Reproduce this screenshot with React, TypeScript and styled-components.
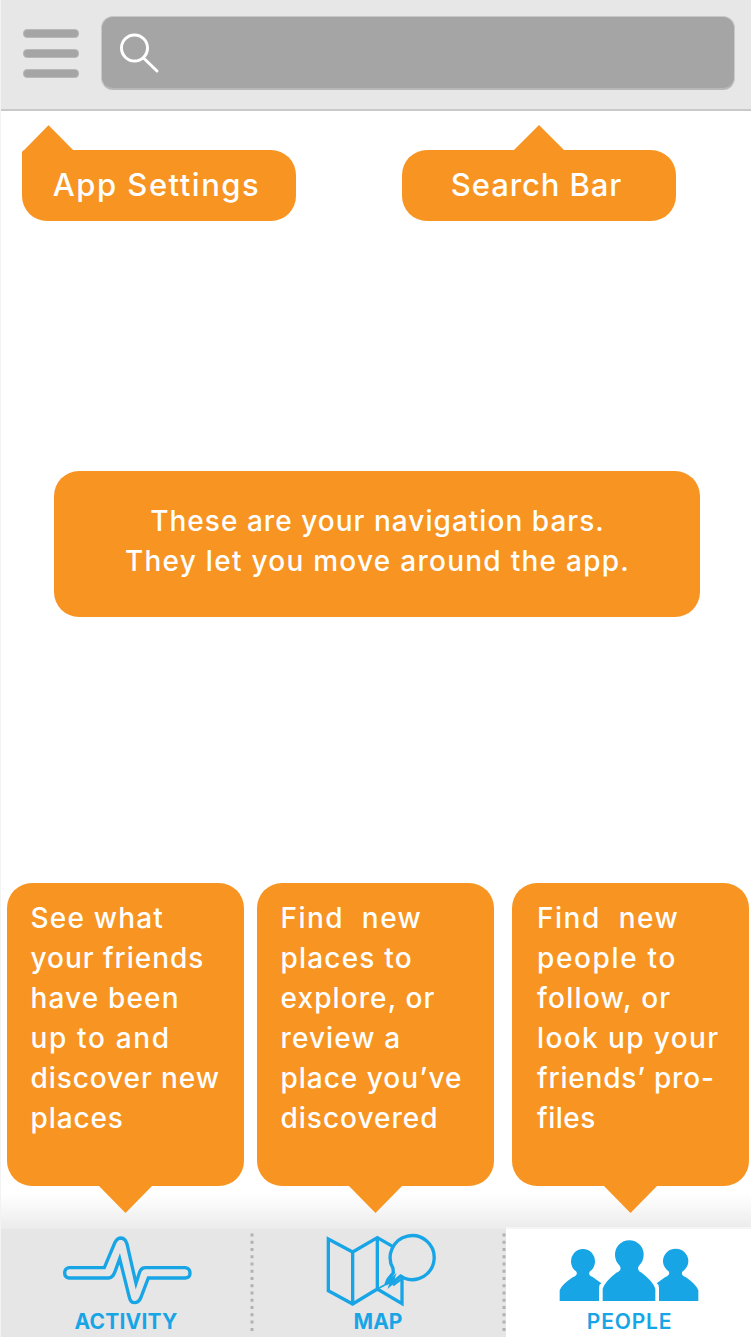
import React from "react";
import styled, { createGlobalStyle, css } from "styled-components";

const ORANGE = "#f89422";
const BLUE = "#18a5e6";

const GlobalStyle = createGlobalStyle`
  * { box-sizing: border-box; }
  body { margin: 0; background: #fff; font-family: Inter, sans-serif; }
`;

const Screen = styled.div`
  display: flex;
  flex-direction: column;
  width: 751px;
  height: 1337px;
  overflow: hidden;
  background: #fff;
  border-left: 1px solid #f3f3f3;
`;

const Header = styled.header`
  display: flex;
  flex: none;
  align-items: flex-start;
  gap: 22px;
  height: 111px;
  padding: 16px 16px 0 22px;
  background: #e7e7e7;
  border-bottom: 2px solid #c9c9c9;
`;

const MenuButton = styled.div`
  display: flex;
  flex-direction: column;
  gap: 11px;
  width: 56px;
  padding-top: 13px;
`;

const MenuBar = styled.span`
  height: 9px;
  border-radius: 4px;
  background: #a5a5a5;
  border: 1px solid #b8b8b8;
`;

const SearchField = styled.div`
  flex: 1;
  height: 74px;
  padding: 15px 17px;
  border-radius: 12px;
  background: #a5a5a5;
  border: 1px solid #c8c8c8;
  border-bottom: 2px solid #b8b8b8;
`;

const Body = styled.main`
  display: flex;
  flex: 1;
  flex-direction: column;
  padding: 39px 0 0;
`;

const bubble = css`
  position: relative;
  border-radius: 25px;
  background: ${ORANGE};
  color: #fff;
  font-weight: 550;
`;

const TipRow = styled.div`
  display: flex;
  gap: 106px;
  padding-left: 21px;
`;

const Tip = styled.div<{ $corner?: boolean }>`
  ${bubble}
  display: flex;
  justify-content: center;
  width: 274px;
  height: 71px;
  padding-right: 5px;
  ${(p) => p.$corner && "border-top-left-radius: 0;"}
  ${(p) => p.$corner && "clip-path: polygon(0 2px, 26.5px -25px, 52px 0, 100% 0, 100% 100%, 0 100%);"}
  font-size: 31px;
  line-height: 70px;
  &::before {
    content: "";
    position: absolute;
    top: -25px;
    left: ${(p) => (p.$corner ? "0" : "110px")};
    width: ${(p) => (p.$corner ? "53px" : "54px")};
    height: 27px;
    background: ${ORANGE};
    clip-path: polygon(50% 0, 100% 100%, 0 100%);
  }
`;

const Message = styled.div`
  ${bubble}
  display: flex;
  flex: none;
  flex-direction: column;
  align-items: center;
  width: 646px;
  height: 146px;
  margin: 249.5px 0 266.5px 53px;
  padding: 30.5px 0 0 1px;
  font-size: 28px;
  line-height: 40px;
`;

const Line = styled.span<{ $track?: number }>`
  display: block;
  width: max-content;
  white-space: pre;
  letter-spacing: ${(p) => p.$track ?? 0}px;
`;

const GuideRow = styled.div`
  display: flex;
  flex: none;
  height: 346px;
  padding-left: 6px;
  background: linear-gradient(to bottom, #fff 310px, #f8f8f8 324px, #ebebeb 346px);
`;

const Guide = styled.div<{ $gap?: number; $inset?: number }>`
  ${bubble}
  flex: none;
  width: 237px;
  height: 303px;
  margin-left: ${(p) => p.$gap ?? 0}px;
  padding: 15px 0 0 ${(p) => p.$inset ?? 23.5}px;
  font-size: 28px;
  line-height: 40px;
  &::after {
    content: "";
    position: absolute;
    left: 91px;
    bottom: -27px;
    width: 55px;
    height: 28px;
    background: ${ORANGE};
    clip-path: polygon(0 0, 100% 0, 50% 100%);
  }
`;

const TabBar = styled.nav`
  display: flex;
  flex: none;
  height: 108px;
  background: #e6e6e6;
`;

const Tab = styled.div<{ $width: number; $top: number; $active?: boolean; $shift?: number }>`
  display: flex;
  flex: none;
  flex-direction: column;
  align-items: center;
  justify-content: space-between;
  width: ${(p) => p.$width}px;
  padding: ${(p) => p.$top}px 0 3px ${(p) => p.$shift ?? 0}px;
  background: ${(p) => (p.$active ? "#fff" : "transparent")};
  box-shadow: ${(p) => (p.$active ? "0 -2px 0 #f5f5f5" : "none")};
  color: ${BLUE};
`;

const TabLabel = styled.span<{ $track: number; $weight: number; $pull?: number }>`
  margin-right: ${(p) => p.$pull ?? 0}px;
  font-size: 21px;
  line-height: 24px;
  font-weight: ${(p) => p.$weight};
  letter-spacing: ${(p) => p.$track}px;
`;

const Divider = styled.svg`
  flex: none;
`;

const Dots = () => (
  <Divider width="4" height="108" viewBox="0 0 4 108">
    <path d="M2 4.5V103" stroke="#b2b2b2" strokeWidth="3" strokeDasharray="3 4.26" />
  </Divider>
);

const SearchIcon = () => (
  <svg width="42" height="42" viewBox="0 0 42 42" fill="none" stroke="#fff" strokeWidth="3" strokeLinecap="round">
    <circle cx="15.5" cy="16" r="13" />
    <path d="M24.5 26L38 39" />
  </svg>
);

const PulseIcon = () => (
  <svg width="131" height="71" viewBox="186 195 393 213" fill="none" stroke={BLUE} strokeWidth="10">
    <path d="M207 293H313L345 217Q352 204 363 204Q376 205 381 222L408 340L419 306Q424 293 436 293H556Q570 295 570 309Q570 323 556 324H445L422 384Q416 398 403 398Q392 398 388 382L359 266L345 305Q338 324 325 324H207Q194 322 194 309Q194 295 207 293Z" />
  </svg>
);

const MapIcon = () => (
  <svg width="112" height="74" viewBox="228 189 336 222" fill="none" stroke={BLUE} strokeWidth="10">
    <path d="M432 230L385 203L311 246L238 207V362L311 402L385 357L459 401V322M311 246V402M385 203V357" />
    <path d="M432 295A66 66 0 1 1 465 324L455 318L426 342L432 325L411 343L417 328L433 308Z" />
    <path d="M385 357L414 341" strokeWidth="5" />
    <path d="M432 346L456 328" strokeWidth="7" />
  </svg>
);

const PeopleIcon = () => (
  <svg width="141" height="62" viewBox="193 209 423 186" fill={BLUE}>
    <path d="M195 392V360Q200 344 234 321Q252 314 244 303A36 37 0 1 1 286 303Q278 314 294 320L320 339Q313 342 313 352V392Z" />
    <path d="M493 392V352Q493 342 486 339L512 320Q528 314 522 303A38 37 0 1 1 564 303Q556 314 574 321Q606 344 611 360V392Z" />
    <path d="M324 392V355Q330 334 365 307Q384 300 375 286A43 44 0 1 1 433 286Q424 300 441 307Q476 334 482 355V392Z" />
  </svg>
);

export default function App() {
  return (
    <>
      <GlobalStyle />
      <Screen>
        <Header>
          <MenuButton>
            <MenuBar />
            <MenuBar />
            <MenuBar />
          </MenuButton>
          <SearchField>
            <SearchIcon />
          </SearchField>
        </Header>
        <Body>
          <TipRow>
            <Tip $corner><Line $track={1.5}>App Settings</Line></Tip>
            <Tip><Line $track={0.9}>Search Bar</Line></Tip>
          </TipRow>
          <Message>
            <Line $track={1.03}>These are your navigation bars.</Line>
            <Line $track={1.26}>They let you move around the app.</Line>
          </Message>
          <GuideRow>
            <Guide>
              <Line $track={1.2}>See what</Line>
              <Line $track={0.97}>your friends</Line>
              <Line $track={1.15}>have been</Line>
              <Line $track={1.65}>up to and</Line>
              <Line $track={0.92}>discover new</Line>
              <Line $track={0.9}>places</Line>
            </Guide>
            <Guide $gap={13}>
              <Line $track={1.45}>Find  new</Line>
              <Line $track={1.2}>places to</Line>
              <Line $track={1.1}>explore, or</Line>
              <Line $track={1.1}>review a</Line>
              <Line $track={0.98}>place you’ve</Line>
              <Line $track={1}>discovered</Line>
            </Guide>
            <Guide $gap={18} $inset={25}>
              <Line $track={1.5}>Find  new</Line>
              <Line $track={1.65}>people to</Line>
              <Line $track={1.25}>follow, or</Line>
              <Line $track={1.4}>look up your</Line>
              <Line $track={0.8}>friends’ pro-</Line>
              <Line $track={0.5}>files</Line>
            </Guide>
          </GuideRow>
        </Body>
        <TabBar>
          <Tab $width={249} $top={6} $shift={4}>
            <PulseIcon />
            <TabLabel $track={0.2} $weight={700} $pull={3}>ACTIVITY</TabLabel>
          </Tab>
          <Dots />
          <Tab $width={248} $top={4} $shift={6}>
            <MapIcon />
            <TabLabel $track={0} $weight={700} $pull={6}>MAP</TabLabel>
          </Tab>
          <Dots />
          <Tab $width={245} $top={11} $active $shift={2}>
            <PeopleIcon />
            <TabLabel $track={0.8} $weight={600}>PEOPLE</TabLabel>
          </Tab>
        </TabBar>
      </Screen>
    </>
  );
}
